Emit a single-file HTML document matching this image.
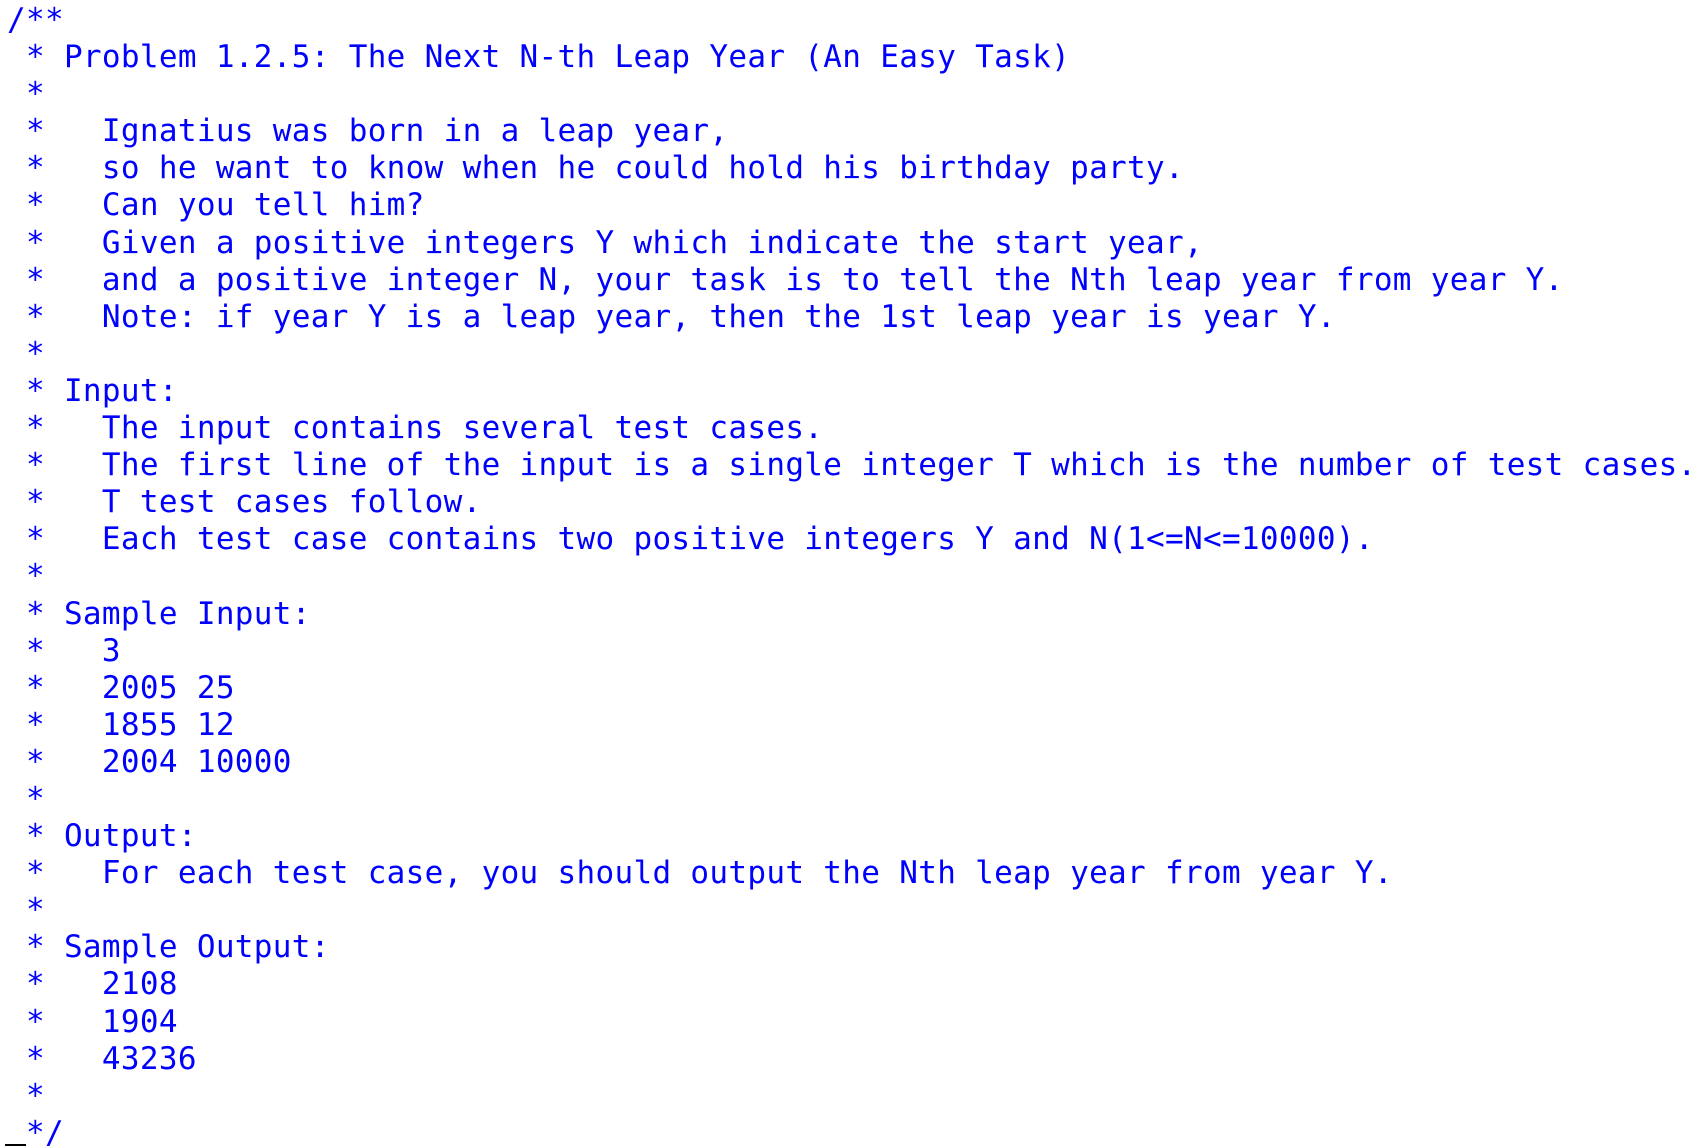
<!DOCTYPE html>
<html><head><meta charset="utf-8"><style>
html,body{margin:0;padding:0;background:#fff;width:1698px;height:1148px;overflow:hidden}
pre{margin:0;padding:2px 0 0 7px;font-family:"DejaVu Sans Mono","Liberation Mono",monospace;font-size:31px;line-height:37.1px;color:#0000ff;letter-spacing:0.32px}
.cur{position:absolute;left:5px;top:1144px;width:21px;height:2px;background:#000}
</style></head><body><pre>/**
 * Problem 1.2.5: The Next N-th Leap Year (An Easy Task)
 *
 *   Ignatius was born in a leap year,
 *   so he want to know when he could hold his birthday party.
 *   Can you tell him?
 *   Given a positive integers Y which indicate the start year,
 *   and a positive integer N, your task is to tell the Nth leap year from year Y.
 *   Note: if year Y is a leap year, then the 1st leap year is year Y.
 *
 * Input:
 *   The input contains several test cases.
 *   The first line of the input is a single integer T which is the number of test cases.
 *   T test cases follow.
 *   Each test case contains two positive integers Y and N(1&lt;=N&lt;=10000).
 *
 * Sample Input:
 *   3
 *   2005 25
 *   1855 12
 *   2004 10000
 *
 * Output:
 *   For each test case, you should output the Nth leap year from year Y.
 *
 * Sample Output:
 *   2108
 *   1904
 *   43236
 *
 */</pre><div class="cur"></div></body></html>
